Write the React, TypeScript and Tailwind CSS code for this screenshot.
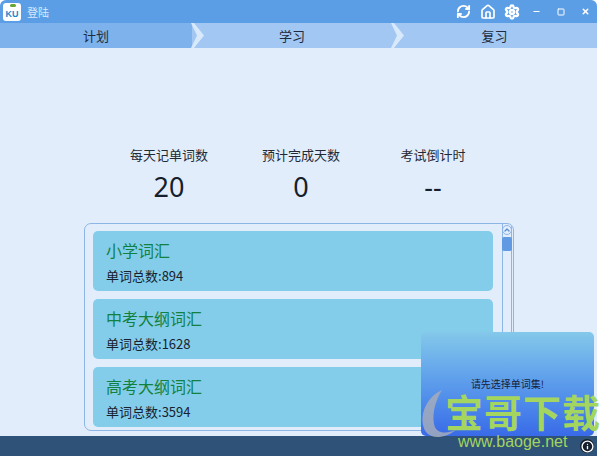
import { RefreshCw, Settings, Minus, X, Square, Home, Info, ChevronUp } from "lucide-react";

const font = { fontFamily: '"Noto Sans CJK SC", "Liberation Sans", sans-serif' };

function Chevron({ className }: { className?: string }) {
  return (
    <svg width="14" height="25" viewBox="0 0 14 25" className={className}>
      <path d="M0 0 L3 0 L13 12.5 L3 25 L0 25 L6 12.5 Z" fill="#d8e9fb" />
    </svg>
  );
}

function Tab({ label, active, chevron, w }: { label: string; active?: boolean; chevron?: boolean; w: string }) {
  return (
    <div className={`relative flex items-center justify-center ${w} ${active ? "bg-[#7eb2ec]" : "bg-[#a2c7f3]"}`}>
      <span className="text-[13px] leading-none text-[#1d2c40]">{label}</span>
      {chevron && <Chevron className="absolute right-[-13px] top-0 z-10" />}
    </div>
  );
}

function Stat({ label, value }: { label: string; value: string }) {
  return (
    <div className="flex w-[132px] flex-col items-center">
      <div className="text-[13px] leading-[18px] text-[#1f2a36]">{label}</div>
      <div className="mt-[6px] text-[27px] leading-[34px] text-[#15202c]" style={{ fontFamily: '"Noto Sans", sans-serif' }}>{value}</div>
    </div>
  );
}

function Card({ title, count }: { title: string; count: number }) {
  return (
    <div className="flex h-[60px] w-[400px] shrink-0 flex-col rounded-[5px] bg-[#84cdea] pl-[13px] pt-[7px]">
      <div className="text-[16px] leading-[24px] text-[#11813f]">{title}</div>
      <div className="mt-[5px] text-[13px] leading-[18px] text-[#16222e]">单词总数:{count}</div>
    </div>
  );
}

export default function App() {
  return (
    <div className="relative h-[456px] w-[600px] overflow-hidden bg-white" style={font}>
      <div className="flex h-[456px] w-[597px] flex-col overflow-hidden rounded-t-[6px] bg-[#e2edfb]">
        <div className="flex h-[23px] shrink-0 items-center bg-[#5b9ee6] pl-[3px]">
          <div className="relative flex h-[18px] w-[18px] items-end justify-center rounded-[3px] bg-white pb-[1px]">
            <span className="absolute left-[7px] top-[1px] h-[3px] w-[6px] rounded-full bg-[#6aa53a]" />
            <span className="text-[9px] font-bold leading-[11px] text-[#1f86c9]" style={{ fontFamily: '"Liberation Sans", sans-serif' }}>KU</span>
          </div>
          <span className="ml-[6px] mt-[1px] text-[11px] text-[#d9e9fb]">登陆</span>
          <div className="ml-auto flex items-center text-white">
            <RefreshCw size={15} strokeWidth={3} />
            <Home size={16} strokeWidth={2.5} className="ml-[9px]" />
            <Settings size={16} strokeWidth={3.5} className="ml-[8px]" />
            <Minus size={9} strokeWidth={3} className="ml-[12px]" />
            <Square size={8} strokeWidth={3} className="ml-[16px]" />
            <X size={9} strokeWidth={4} className="ml-[16px] mr-[7px]" />
          </div>
        </div>
        <div className="flex h-[25px] shrink-0">
          <Tab label="计划" active chevron w="w-[192px]" />
          <Tab label="学习" chevron w="w-[200px]" />
          <Tab label="复习" w="w-[205px]" />
        </div>
        <div className="flex flex-1 flex-col">
          <div className="ml-[103px] mt-[98px] flex">
            <Stat label="每天记单词数" value="20" />
            <Stat label="预计完成天数" value="0" />
            <Stat label="考试倒计时" value="--" />
          </div>
          <div className="ml-[84px] mt-[19px] flex h-[208px] w-[430px] overflow-hidden rounded-[7px] border border-[#8db5e6]">
            <div className="flex flex-col gap-[8px] pl-[8px] pt-[7px]">
              <Card title="小学词汇" count={894} />
              <Card title="中考大纲词汇" count={1628} />
              <Card title="高考大纲词汇" count={3594} />
            </div>
            <div className="ml-[9px] flex h-full w-[10px] flex-col items-center border-x border-[#8db5e6]">
              <div className="mt-[1px] flex h-[10px] w-[10px] shrink-0 items-center justify-center rounded-full border border-[#8db5e6] text-[#5b8fd0]">
                <ChevronUp size={8} strokeWidth={4} />
              </div>
              <div className="mt-[2px] h-[14px] w-[10px] rounded-[2px] bg-[#5f9ae3]" />
            </div>
          </div>
        </div>
        <div className="flex h-[20px] shrink-0 items-center justify-end bg-[#2f5278] pr-[3px]">
          <div className="z-30 flex h-[14px] w-[14px] items-center justify-center rounded-full bg-[#15202c] text-white">
            <Info size={13} strokeWidth={2.5} />
          </div>
        </div>
      </div>

      <div className="absolute left-[421px] top-[332px] flex h-[104px] w-[173px] items-center justify-center rounded-[5px] bg-gradient-to-b from-[#84c8ea] to-[#3a6ae8]">
        <span className="mt-[-2px] text-[10px] text-[#14233a]">请先选择单词集!</span>
      </div>

      <svg width="70" height="70" viewBox="0 0 70 70" className="absolute left-[412px] top-[388px]">
        <path d="M30 2 C12 10 6 32 14 44 C20 52 34 50 44 42 C34 46 24 46 22 36 C20 24 24 12 30 2 Z" fill="#a5abbb" opacity="0.85" />
      </svg>
      <div className="absolute left-[445px] top-[392px] text-[38px] font-bold leading-[38px] tracking-[1px] text-[#a3d55f] whitespace-nowrap">宝哥下载</div>
      <div className="absolute left-[458px] top-[432px] text-[16px] leading-[20px] text-[#a3d55f]" style={{ fontFamily: '"Liberation Sans", sans-serif' }}>www.baoge.net</div>
    </div>
  );
}
